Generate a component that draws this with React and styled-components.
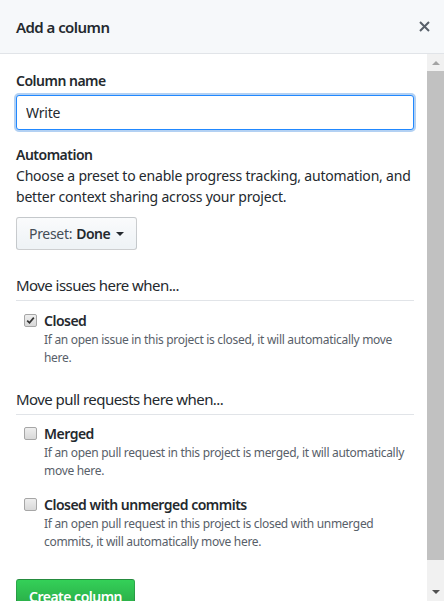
import React from "react";
import styled, { createGlobalStyle } from "styled-components";

const Global = createGlobalStyle`
  html, body { margin: 0; padding: 0; background: #fff; }
  body { font-family: "Noto Sans", "Open Sans", sans-serif; color: #24292e; font-size: 14px; }
  * { box-sizing: border-box; }
`;

const Modal = styled.div`
  width: 444px;
  height: 601px;
  display: flex;
  flex-direction: column;
  overflow: hidden;
  background: #fff;
`;

const Header = styled.div`
  height: 54px;
  flex: none;
  display: flex;
  align-items: center;
  justify-content: space-between;
  padding: 0 13px 0 16px;
  background: #f6f8fa;
  border-bottom: 1px solid #e1e4e8;
`;

const Title = styled.h3`
  margin: 0;
  font-size: 15px;
  font-weight: 600;
  color: #24292e;
  letter-spacing: -0.55px;
`;

const Close = styled.button`
  border: 0;
  background: none;
  padding: 0;
  width: 14px;
  height: 14px;
  display: flex;
  align-items: center;
  justify-content: center;
  color: #586069;
`;

const BodyRow = styled.div`
  flex: 1;
  min-height: 0;
  display: flex;
`;

const Content = styled.div`
  flex: 1;
  min-width: 0;
  overflow: hidden;
  padding: 16px 13px 16px 16px;
`;

const Scrollbar = styled.div`
  width: 17px;
  flex: none;
  display: flex;
  flex-direction: column;
  background: #f1f1f1;
`;

const ScrollArrow = styled.div`
  height: 17px;
  flex: none;
  display: flex;
  align-items: center;
  justify-content: center;
`;

const Track = styled.div`
  flex: 1;
  display: flex;
  flex-direction: column;
`;

const Thumb = styled.div`
  height: 489px;
  background: #c1c1c1;
`;

const Label = styled.label`
  display: block;
  font-weight: 600;
  line-height: 21px;
  font-size: 14px;
  letter-spacing: -0.5px;
`;

const Input = styled.input`
  display: block;
  width: 100%;
  height: 35px;
  margin-top: 4px;
  padding: 6px 9px;
  font: inherit;
  font-size: 14px;
  letter-spacing: -0.2px;
  color: #24292e;
  border: 1px solid #2188ff;
  border-radius: 3px;
  outline: none;
  box-shadow: 0 0 0 2px rgba(3, 102, 214, 0.3);
`;

const Section = styled.div`
  margin-top: ${(p) => p.$mt || 0}px;
`;

const Desc = styled.p`
  margin: 0;
  line-height: 21px;
  color: #24292e;
  font-size: 14px;
  letter-spacing: -0.2px;
`;

const PresetButton = styled.button`
  margin-top: 10px;
  height: 33px;
  display: inline-flex;
  align-items: center;
  gap: 4px;
  padding: 0 12px;
  font: inherit;
  font-size: 14px;
  letter-spacing: -0.3px;
  color: #444d56;
  background: linear-gradient(-180deg, #fafbfc 0%, #eff3f6 90%);
  border: 1px solid rgba(27, 31, 35, 0.2);
  border-radius: 3px;
`;

const Strong = styled.span`
  color: #24292e;
  font-weight: 600;
  letter-spacing: -0.5px;
`;

const Caret = styled.span`
  display: inline-block;
  width: 0;
  height: 0;
  margin-left: 2px;
  border-top: 4px solid #24292e;
  border-left: 4px solid transparent;
  border-right: 4px solid transparent;
`;

const GroupTitle = styled.h4`
  margin: 0;
  font-size: 15px;
  font-weight: 400;
  line-height: 21px;
  letter-spacing: -0.55px;
  padding-bottom: 4px;
  border-bottom: 1px solid #e1e4e8;
  color: #24292e;
`;

const Group = styled.div`
  margin-top: ${(p) => p.$mt}px;
`;

const Option = styled.div`
  display: grid;
  grid-template-columns: 28px 1fr;
  margin-top: ${(p) => p.$mt}px;
`;

const CheckCell = styled.div`
  padding: 4px 0 0 8px;
`;

const Check = styled.span`
  display: flex;
  align-items: center;
  justify-content: center;
  width: 13px;
  height: 13px;
  border: 1px solid #a6a6a6;
  border-radius: 2px;
  background: linear-gradient(#eeeeee, #d8d8d8);
`;

const OptionLabel = styled.div`
  font-weight: 600;
  line-height: 21px;
  font-size: 14px;
  letter-spacing: -0.5px;
`;

const Note = styled.p`
  margin: 0;
  font-size: 12px;
  line-height: 18px;
  letter-spacing: -0.3px;
  color: #586069;
`;

const CreateButton = styled.button`
  margin-top: 28px;
  height: 34px;
  padding: 0 12px;
  font: inherit;
  font-size: 14px;
  font-weight: 600;
  letter-spacing: -0.5px;
  color: #fff;
  background: linear-gradient(-180deg, #34d058 0%, #28a745 90%);
  border: 1px solid rgba(27, 31, 35, 0.2);
  border-radius: 3px;
`;

function CheckBox({ checked }) {
  return (
    <Check>
      {checked && (
        <svg width="9" height="9" viewBox="0 0 9 9">
          <path d="M1.2 4.6 L3.5 6.8 L7.8 1.6" fill="none" stroke="#333" strokeWidth="1.7" />
        </svg>
      )}
    </Check>
  );
}

function Opt({ checked, label, note, mt }) {
  return (
    <Option $mt={mt}>
      <CheckCell>
        <CheckBox checked={checked} />
      </CheckCell>
      <div>
        <OptionLabel>{label}</OptionLabel>
        <Note>{note}</Note>
      </div>
    </Option>
  );
}

export default function App() {
  return (
    <>
      <Global />
      <Modal>
        <Header>
          <Title>Add a column</Title>
          <Close aria-label="Close">
            <svg width="11" height="11" viewBox="0 0 11 11">
              <path d="M1 1 L10 10 M10 1 L1 10" stroke="#586069" strokeWidth="2" />
            </svg>
          </Close>
        </Header>
        <BodyRow>
          <Content>
            <Label>Column name</Label>
            <Input defaultValue="Write" />
            <Section $mt={14}>
              <Label>Automation</Label>
              <Desc>
                Choose a preset to enable progress tracking, automation, and better context sharing across your
                project.
              </Desc>
              <PresetButton>
                Preset: <Strong>Done</Strong>
                <Caret />
              </PresetButton>
            </Section>
            <Group $mt={25}>
              <GroupTitle>Move issues here when...</GroupTitle>
              <Opt
                mt={9}
                checked
                label="Closed"
                note="If an open issue in this project is closed, it will automatically move here."
              />
            </Group>
            <Group $mt={22}>
              <GroupTitle>Move pull requests here when...</GroupTitle>
              <Opt
                mt={8}
                label="Merged"
                note="If an open pull request in this project is merged, it will automatically move here."
              />
              <Opt
                mt={14}
                label="Closed with unmerged commits"
                note="If an open pull request in this project is closed with unmerged commits, it will automatically move here."
              />
            </Group>
            <CreateButton>Create column</CreateButton>
          </Content>
          <Scrollbar>
            <ScrollArrow>
              <svg width="8" height="5" viewBox="0 0 8 5">
                <path d="M0 5 L4 1 L8 5 Z" fill="#a3a3a3" />
              </svg>
            </ScrollArrow>
            <Track>
              <Thumb />
            </Track>
            <ScrollArrow>
              <svg width="8" height="5" viewBox="0 0 8 5">
                <path d="M0 0 L4 4 L8 0 Z" fill="#505050" />
              </svg>
            </ScrollArrow>
          </Scrollbar>
        </BodyRow>
      </Modal>
    </>
  );
}
